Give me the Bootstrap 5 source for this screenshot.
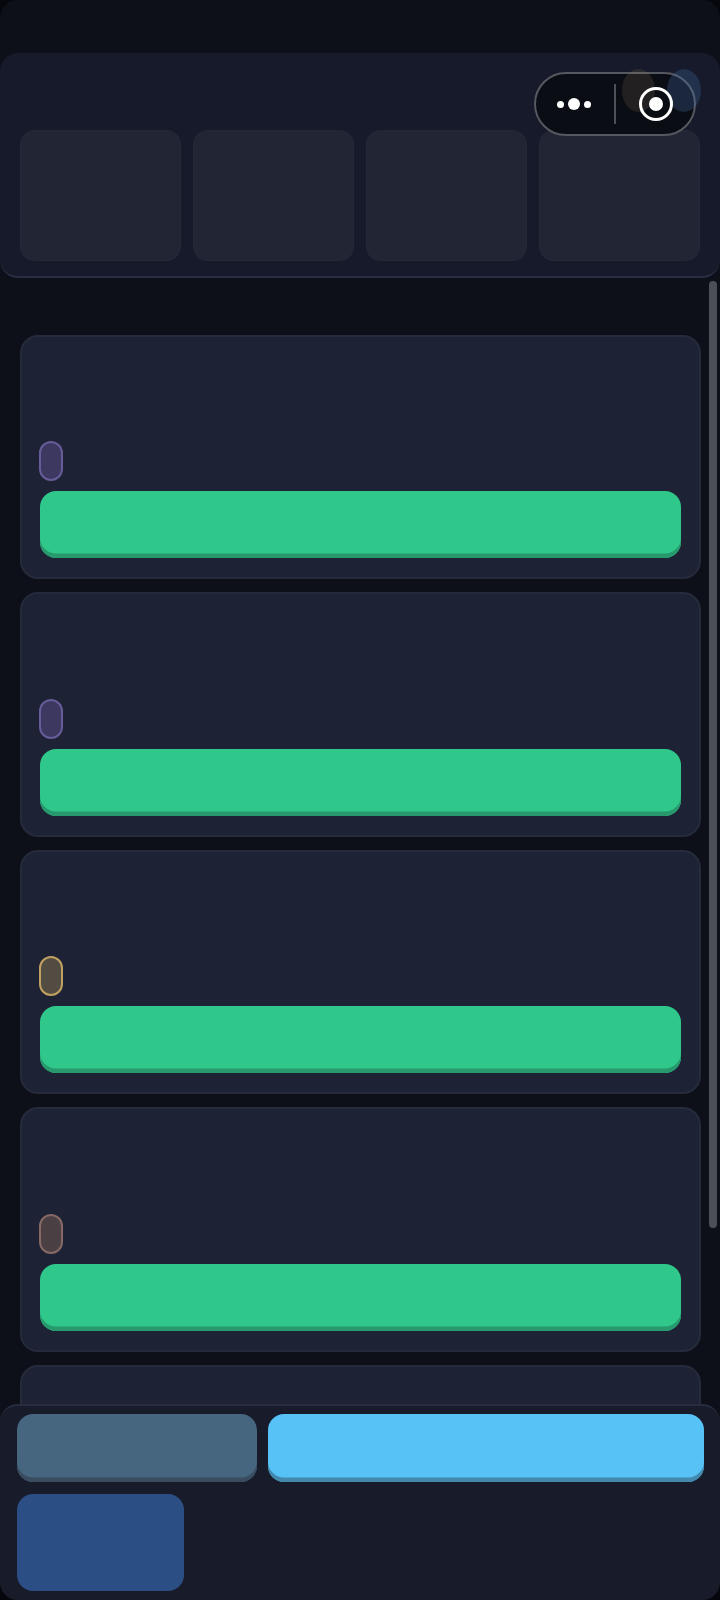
<!DOCTYPE html>
<html lang="en">
<head>
<meta charset="utf-8">
<title>Tasks</title>
<link rel="stylesheet" href="https://cdn.jsdelivr.net/npm/bootstrap@5.3.0/dist/css/bootstrap.min.css">
<style>
html, body { height: 100%; background: #05070c; }
body { font-family: "Liberation Sans", sans-serif; overflow: hidden; }
.app-shell { height: 1600px; border-radius: 18px; background: #0d1019; overflow: hidden; }
.hdr { margin-top: 53px; height: 225px; padding: 0 20px 15px; background: #161a2a; border-bottom: 2px solid #2a2e42; border-radius: 18px; }
.tile-row { gap: 12px; }
.tile { flex: 1 1 0; height: 131px; background: #222533; border: 1px solid #252836; border-radius: 14px; }
.blob { top: -5px; width: 33px; height: 43px; border-radius: 50%; }
.blob-tan { left: 86px; background: rgba(170, 140, 100, .15); }
.blob-blue { left: 131px; width: 34px; background: rgba(70, 120, 180, .25); }
.capsule { top: 72px; left: 534px; width: 162px; height: 64px; background: #0b0d14; border: 2px solid #55585f; border-radius: 32px; }
.cap-body { z-index: 1; }
.cap-left { width: 76px; margin-right: 2px; }
.cap-right { width: 80px; }
.cap-rule { width: 2px; height: 40px; background: #4d5058; }
.dot { background: #fff; border-radius: 50%; width: 7px; height: 7px; }
.dot-big { width: 12px; height: 12px; }
.ring { width: 34px; height: 34px; border: 3.5px solid #fff; border-radius: 50%; }
.ring-core { width: 14px; height: 14px; background: #fff; border-radius: 50%; }
.task-list { min-height: 0; padding: 57px 19px 0 19.5px; gap: 13px; overflow: hidden; }
.task-card { flex: 0 0 244.4px; background: #1d2334; border: 2px solid #262b3c; border-radius: 18px; padding: 0 18px 19px 18.5px; justify-content: flex-end; }
.pill-tag { width: 24px; height: 40px; margin-left: -1px; margin-bottom: 10px; border-radius: 13px; border: 2px solid; }
.tag-violet { background: #3c3860; border-color: #675c9a; }
.tag-amber { background: #524c42; border-color: #c0a060; }
.tag-rose { background: #4a4044; border-color: #866864; }
.go-btn { display: block; width: 100%; height: 67px; padding: 0; border: 0; border-radius: 16px; }
.go-green { background: #2fc88a; box-shadow: inset 0 -4.5px 0 #27996d; }
.track { top: 281px; left: 709px; width: 8px; height: 947px; background: #4b4f57; border-radius: 5px; }
.dock { height: 196px; padding: 8px 16px 9px 16.5px; background: #181b29; border-top: 2px solid #282c40; border-radius: 18px 18px 0 0; }
.dock-row { gap: 11px; }
.go-slate { flex: 0 0 240px; height: 68px; background: #46657f; box-shadow: inset 0 -4.5px 0 #3a4d60; }
.go-sky { flex: 1 1 0; height: 68px; background: #56c2f6; box-shadow: inset 0 -4.5px 0 #4389ad; }
.go-navy { width: 167px; height: 97px; margin-top: 12px; background: #2b4f84; }
</style>
</head>
<body>
<div class="app-shell position-relative d-flex flex-column">
  <header class="hdr flex-shrink-0 d-flex align-items-end">
    <div class="tile-row d-flex w-100">
      <div class="tile"></div>
      <div class="tile"></div>
      <div class="tile"></div>
      <div class="tile"></div>
    </div>
  </header>

  <main class="task-list flex-grow-1 d-flex flex-column">
    <div class="card task-card">
      <span class="pill-tag tag-violet"></span>
      <button class="btn go-btn go-green" type="button" aria-label="Start"></button>
    </div>
    <div class="card task-card">
      <span class="pill-tag tag-violet"></span>
      <button class="btn go-btn go-green" type="button" aria-label="Start"></button>
    </div>
    <div class="card task-card">
      <span class="pill-tag tag-amber"></span>
      <button class="btn go-btn go-green" type="button" aria-label="Start"></button>
    </div>
    <div class="card task-card">
      <span class="pill-tag tag-rose"></span>
      <button class="btn go-btn go-green" type="button" aria-label="Start"></button>
    </div>
    <div class="card task-card">
      <span class="pill-tag tag-violet"></span>
      <button class="btn go-btn go-green" type="button" aria-label="Start"></button>
    </div>
  </main>

  <footer class="dock flex-shrink-0">
    <div class="dock-row d-flex">
      <button class="btn go-btn go-slate w-auto" type="button" aria-label="Back"></button>
      <button class="btn go-btn go-sky w-auto" type="button" aria-label="Next"></button>
    </div>
    <button class="btn go-btn go-navy" type="button" aria-label="More"></button>
  </footer>

  <div class="track position-absolute"></div>
  <div class="capsule position-absolute d-flex align-items-center">
    <div class="blob blob-tan position-absolute"></div>
    <div class="blob blob-blue position-absolute"></div>
    <div class="cap-body position-relative d-flex align-items-center">
      <div class="cap-left d-flex align-items-center justify-content-center gap-1">
        <span class="dot"></span><span class="dot dot-big"></span><span class="dot"></span>
      </div>
      <div class="cap-rule"></div>
      <div class="cap-right d-flex align-items-center justify-content-center">
        <div class="ring d-flex align-items-center justify-content-center"><div class="ring-core"></div></div>
      </div>
    </div>
  </div>
</div>
<script src="https://cdn.jsdelivr.net/npm/bootstrap@5.3.0/dist/js/bootstrap.bundle.min.js"></script>
</body>
</html>
